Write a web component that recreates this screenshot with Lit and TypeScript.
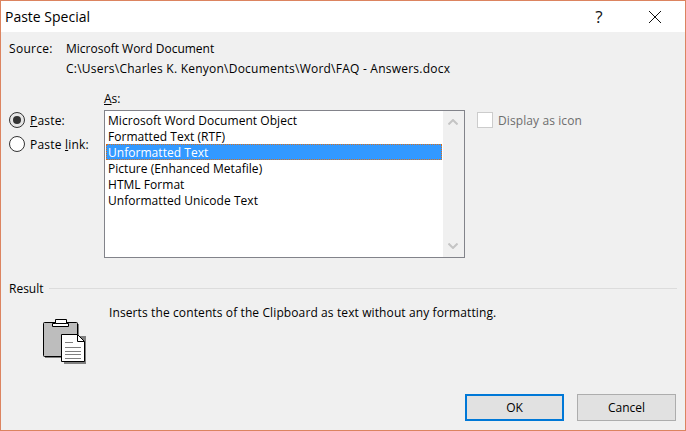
import { LitElement, html, css } from "lit";
import { customElement } from "lit/decorators.js";

const ITEMS = [
  "Microsoft Word Document Object",
  "Formatted Text (RTF)",
  "Unformatted Text",
  "Picture (Enhanced Metafile)",
  "HTML Format",
  "Unformatted Unicode Text",
];

@customElement("app-root")
export class AppRoot extends LitElement {
  static styles = css`
    :host {
      display: block;
      width: 686px;
      height: 431px;
      font-family: "Open Sans", "Noto Sans", sans-serif;
      font-size: 12px;
      line-height: 16px;
      color: #000;
    }
    .win {
      box-sizing: border-box;
      width: 686px;
      height: 431px;
      border: 1px solid #dc8460;
      background: #f0f0f0;
      display: flex;
      flex-direction: column;
    }
    u { text-underline-offset: 1px; text-decoration-thickness: 1px; }
    .t { display: block; height: 16px; line-height: 18px; white-space: nowrap; }
    .title {
      height: 31px;
      flex: none;
      background: #fff;
      display: flex;
      align-items: center;
      padding-left: 4px;
      font-size: 14px;
      color: #000;
    }
    .title .name { flex: 1; }
    .qm { width: 16px; font-size: 17px; text-align: center; margin-right: 41px; color: #111; }
    .close { width: 14px; height: 14px; margin-right: 23px; display: block; }
    .body { flex: 1; display: flex; flex-direction: column; padding: 9px 8px 0; min-height: 0; }
    .source { display: grid; grid-template-columns: 57px auto; row-gap: 4px; }
    .wide-label { letter-spacing: 0.3px; }
    .path { letter-spacing: 0.23px; }
    .main { display: flex; margin-top: 13px; }
    .radios { width: 95px; flex: none; padding-top: 22px; display: flex; flex-direction: column; gap: 8px; }
    .radio { display: flex; align-items: center; gap: 5px; height: 16px; letter-spacing: 0.2px; }
    .dot {
      box-sizing: border-box; width: 16px; height: 16px; border-radius: 50%;
      border: 1px solid #333; background: #fff; display: flex; align-items: center; justify-content: center;
    }
    .dot.on { background: #e6e6e6; border-width: 1.5px; }
    .dot.on::after { content: ""; width: 8px; height: 8px; border-radius: 50%; background: #333; }
    .as { margin-bottom: 4px; }
    .listbox {
      box-sizing: border-box; width: 361px; height: 148px; border: 1px solid #82838a;
      background: #fff; display: flex;
    }
    .items { flex: 1; padding: 1px 1px 0 1px; min-width: 0; }
    .item { box-sizing: border-box; height: 16px; padding-left: 2px; line-height: 18px; white-space: nowrap; letter-spacing: 0.04px; }
    .item.sel { background: #3399ff; color: #fff; border: 1px dotted #d9701a; padding-left: 1px; line-height: 16px; }
    .scroll {
      width: 21px; flex: none; background: #f0f0f0; display: flex; flex-direction: column;
      justify-content: space-between; align-items: center; padding: 8px 2px 8px 0; box-sizing: border-box;
    }
    .scroll svg { display: block; }
    .check { display: flex; align-items: flex-start; gap: 5px; margin: 22px 0 0 12px; color: #6d6d6d; letter-spacing: 0.1px; }
    .box { box-sizing: border-box; width: 16px; height: 16px; border: 1px solid #cccccc; background: #fff; flex: none; }
    .result-head { display: flex; align-items: center; gap: 5px; margin-top: 22px; }
    .rule { flex: 1; height: 1px; background: #dcdcdc; }
    .result { display: flex; margin-top: 7px; }
    .icon { display: block; margin: 15px 0 0 33px; flex: none; }
    .desc { margin: 1px 0 0 23px; letter-spacing: 0.11px; }
    .buttons { margin-top: auto; display: flex; justify-content: flex-end; gap: 13px; padding: 0 1px 9px 0; }
    .btn {
      box-sizing: border-box; width: 99px; height: 27px; font: inherit; color: #000;
      background: #e1e1e1; border: 1px solid #adadad; padding: 0;
    }
    .btn.primary { border: 2px solid #0078d7; }
  `;

  render() {
    return html`
      <div class="win">
        <div class="title">
          <span class="name">Paste Special</span>
          <span class="qm">?</span>
          <svg class="close" viewBox="0 0 14 14"><path d="M1 1L13 13M13 1L1 13" stroke="#111" stroke-width="1" fill="none"/></svg>
        </div>
        <div class="body">
          <div class="source">
            <span class="wide-label">Source:</span><span>Microsoft Word Document</span>
            <span></span><span class="path">C:\\Users\\Charles K. Kenyon\\Documents\\Word\\FAQ - Answers.docx</span>
          </div>
          <div class="main">
            <div class="radios">
              <div class="radio"><span class="dot on"></span><span class="t"><u>P</u>aste:</span></div>
              <div class="radio"><span class="dot"></span><span class="t">Paste <u>l</u>ink:</span></div>
            </div>
            <div>
              <div class="as t"><u>A</u>s:</div>
              <div class="listbox">
                <div class="items">
                  ${ITEMS.map((t, i) => html`<div class="item ${i === 2 ? "sel" : ""}">${t}</div>`)}
                </div>
                <div class="scroll">
                  <svg width="10" height="6" viewBox="0 0 10 6"><path d="M0.5 5.5L5 1L9.5 5.5" stroke="#c4c4c4" stroke-width="2" fill="none"/></svg>
                  <svg width="10" height="6" viewBox="0 0 10 6"><path d="M0.5 0.5L5 5L9.5 0.5" stroke="#c4c4c4" stroke-width="2" fill="none"/></svg>
                </div>
              </div>
            </div>
            <div class="check"><span class="box"></span><span class="t">Display as icon</span></div>
          </div>
          <div class="result-head"><span class="t">Result</span><span class="rule"></span></div>
          <div class="result">
            <svg class="icon" width="44" height="46" viewBox="0 0 44 46">
              <path d="M3 6H37V40H3Z" fill="#808080"/>
              <path d="M1.5 5.5Q1.5 4.5 2.5 4.5H34.5Q35.5 4.5 35.5 5.5V37.5Q35.5 38.5 34.5 38.5H2.5Q1.5 38.5 1.5 37.5Z" fill="#bdbdbd" stroke="#000"/>
              <path d="M10.5 8.5V5.5H13.5V1.5H24.5V5.5H26.5V8.5Z" fill="#fff" stroke="#000"/>
              <path d="M13.5 5.5H24.5" stroke="#000" fill="none"/>
              <path d="M22 18H44V46H22Z" fill="#808080"/>
              <path d="M19.5 16.5H35.5L42.5 23.5V43.5H19.5Z" fill="#fff" stroke="#000"/>
              <path d="M35.5 16.5V23.5H42.5" fill="none" stroke="#000"/>
              <path d="M23 24.5H31M23 29.5H39M23 33.5H39M23 36.5H39M23 40.5H39" stroke="#7f7f7f" fill="none"/>
            </svg>
            <div class="desc t">Inserts the contents of the Clipboard as text without any formatting.</div>
          </div>
          <div class="buttons">
            <button class="btn primary">OK</button>
            <button class="btn">Cancel</button>
          </div>
        </div>
      </div>
    `;
  }
}
